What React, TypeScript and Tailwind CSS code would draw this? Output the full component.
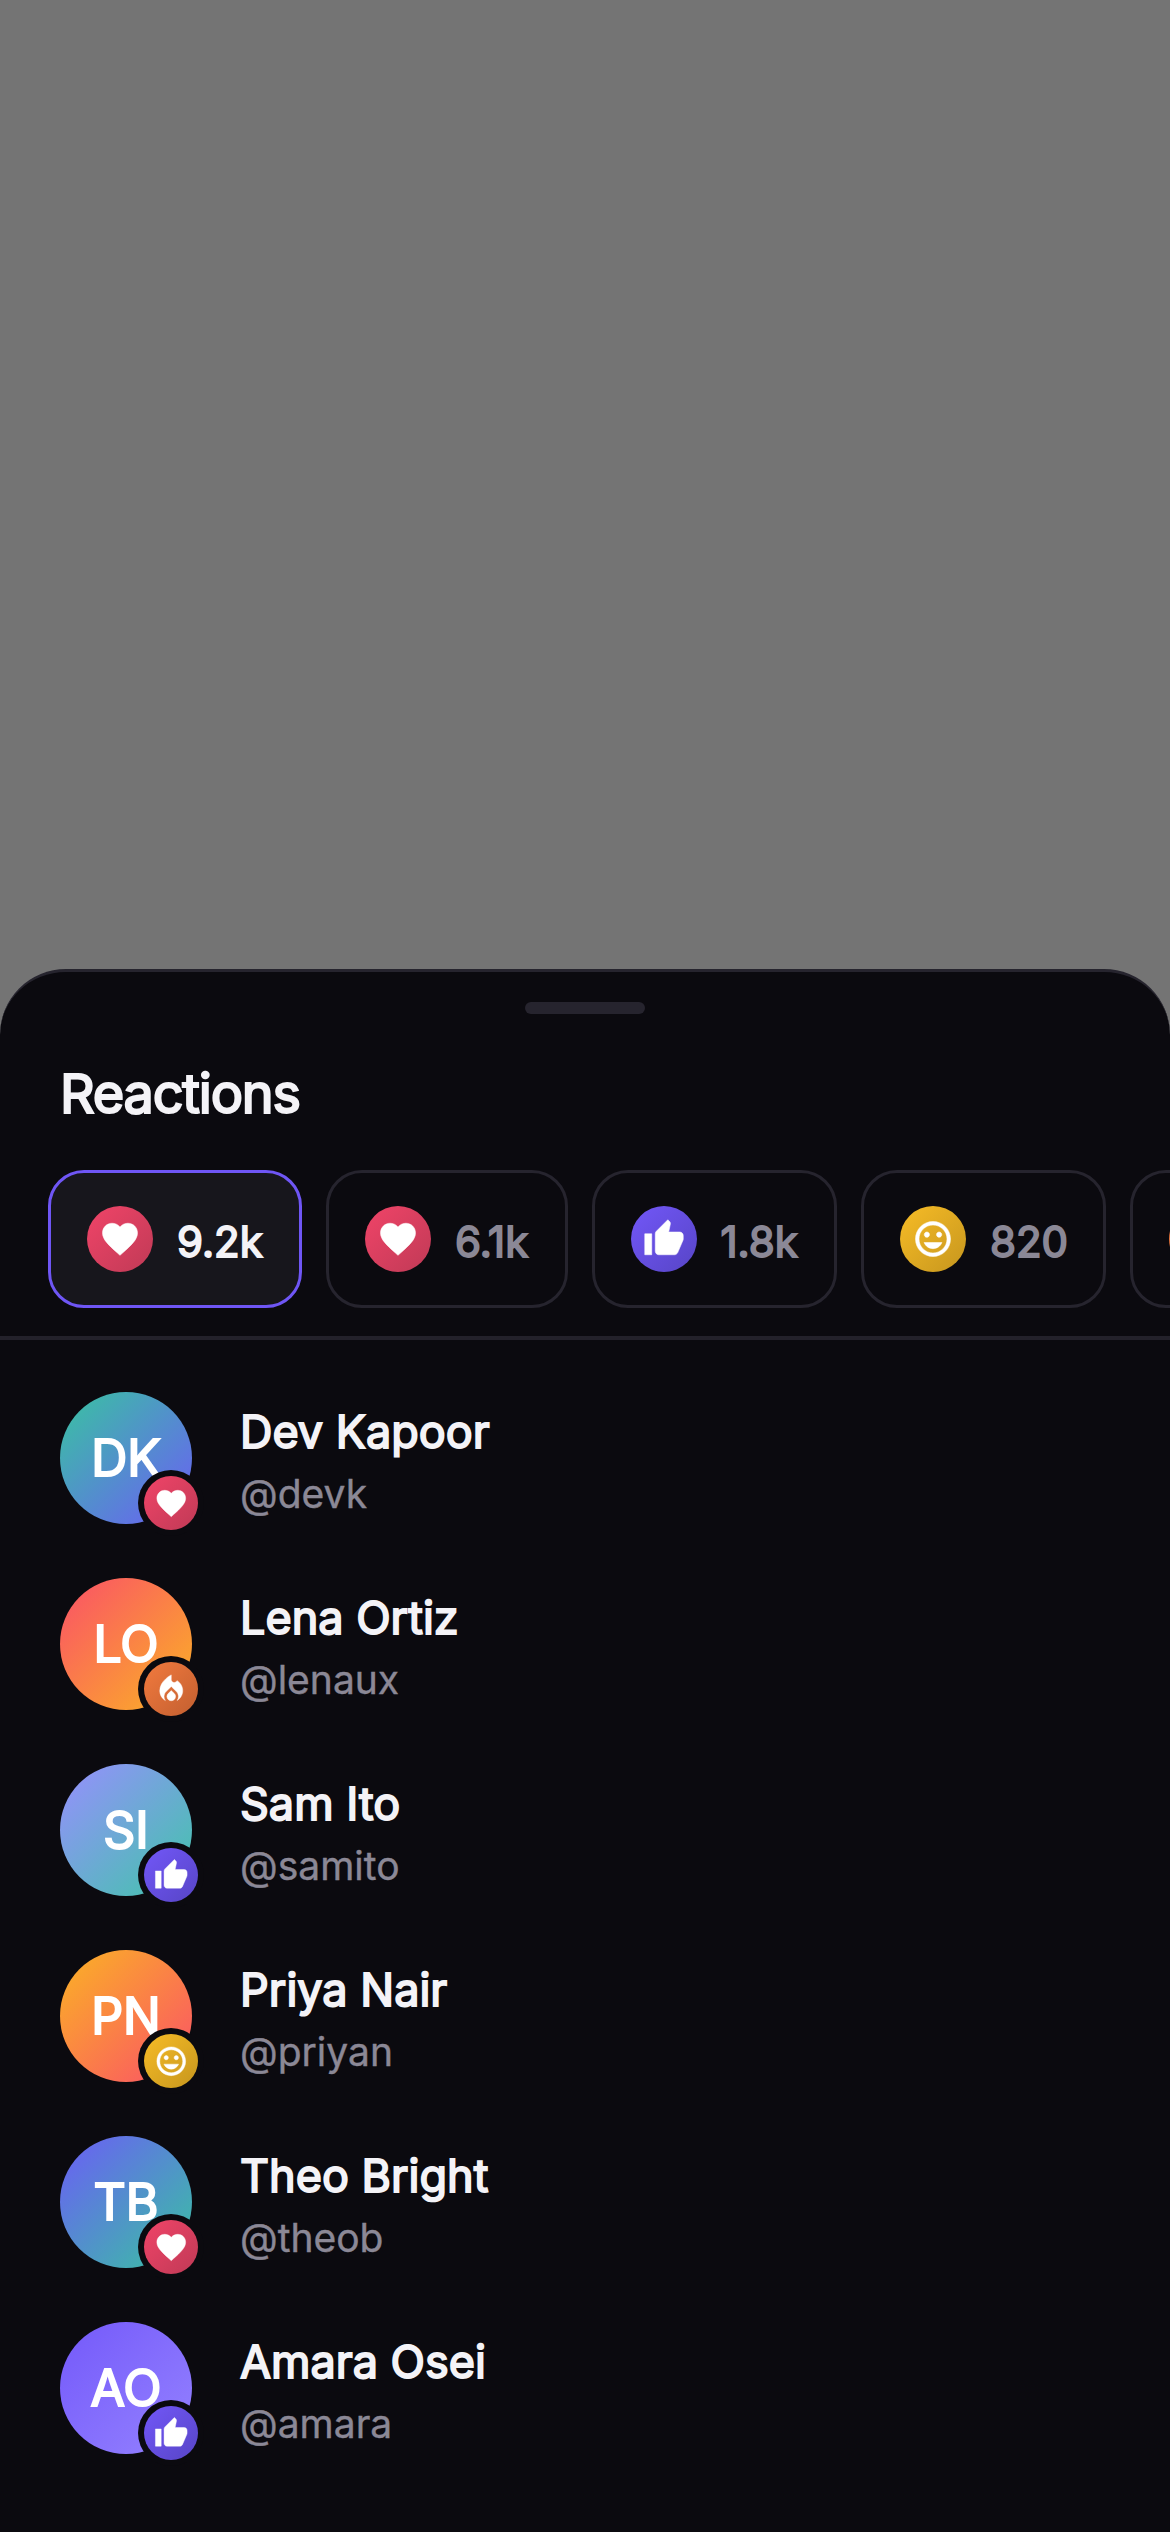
import type { IconType } from "react-icons";
import { MdFavorite, MdLocalFireDepartment, MdMood, MdThumbUp } from "react-icons/md";

type Kind = "love" | "like" | "laugh" | "fire";

const REACTIONS: Record<Kind, { Icon: IconType; bg: string }> = {
  love: { Icon: MdFavorite, bg: "bg-[linear-gradient(135deg,#f04468,#c03a56)]" },
  like: { Icon: MdThumbUp, bg: "bg-[linear-gradient(135deg,#7257f8,#5745c6)]" },
  laugh: { Icon: MdMood, bg: "bg-[linear-gradient(135deg,#f7bc26,#c6961e)]" },
  fire: { Icon: MdLocalFireDepartment, bg: "bg-[linear-gradient(135deg,#f27a3e,#c25f30)]" },
};

const TABS: { kind: Kind; count?: string; width: string }[] = [
  { kind: "love", count: "9.2k", width: "w-[254px]" },
  { kind: "love", count: "6.1k", width: "w-[241.5px]" },
  { kind: "like", count: "1.8k", width: "w-[245.5px]" },
  { kind: "laugh", count: "820", width: "w-[245px]" },
  { kind: "fire", width: "w-[246px]" }, // only its left edge fits on screen
];

const PEOPLE: { initials: string; name: string; handle: string; kind: Kind; bg: string }[] = [
  { initials: "DK", name: "Dev Kapoor", handle: "@devk", kind: "love", bg: "bg-[linear-gradient(135deg,#38c4a0,#6c5cf7)]" },
  { initials: "LO", name: "Lena Ortiz", handle: "@lenaux", kind: "fire", bg: "bg-[linear-gradient(135deg,#fa5068,#fbb324)]" },
  { initials: "SI", name: "Sam Ito", handle: "@samito", kind: "like", bg: "bg-[linear-gradient(135deg,#988eff,#3fc6a8)]" },
  { initials: "PN", name: "Priya Nair", handle: "@priyan", kind: "laugh", bg: "bg-[linear-gradient(135deg,#fbb324,#fa5068)]" },
  { initials: "TB", name: "Theo Bright", handle: "@theob", kind: "love", bg: "bg-[linear-gradient(135deg,#6c5cf7,#38c4a0)]" },
  { initials: "AO", name: "Amara Osei", handle: "@amara", kind: "like", bg: "bg-[linear-gradient(135deg,#7459fa,#9482ff)]" },
];

// The icons carry an invisible 24x24 box path, which must not pick up the stroke.
const ICON = "stroke-[0.3px] text-white [&>[fill=none]]:stroke-none";

function ReactionTab({ kind, count, width, active }: { kind: Kind; count?: string; width: string; active: boolean }) {
  const { Icon, bg } = REACTIONS[kind];
  return (
    <button
      className={`flex h-[138px] flex-none items-center gap-6 rounded-[36px] border-3 px-9 ${width} ${
        active ? "border-[#6f56f5] bg-[#17161c] text-[#f4f3f7]" : "border-[#26242e] text-[#8b8896]"
      }`}
    >
      <span className={`flex size-[66px] flex-none items-center justify-center rounded-full ${bg}`}>
        <Icon className={`size-[42px] ${ICON}`} />
      </span>
      {count && <span className="relative top-[2px] text-[42px] [-webkit-text-stroke:1.8px_currentColor]">{count}</span>}
    </button>
  );
}

function PersonRow({ initials, name, handle, kind, bg }: (typeof PEOPLE)[number]) {
  const { Icon, bg: badge } = REACTIONS[kind];
  return (
    <li className="flex h-[132px] items-center gap-12">
      <div className={`relative flex size-[132px] flex-none items-center justify-center rounded-full ${bg}`}>
        <span className="text-[50px] text-white [-webkit-text-stroke:2px_currentColor]">{initials}</span>
        <span className="absolute -right-3 -bottom-3 flex size-[66px] items-center justify-center rounded-full bg-[#0b0a0f]">
          <span className={`flex size-[54px] items-center justify-center rounded-full ${badge}`}>
            <Icon className={`size-[34.5px] ${ICON}`} />
          </span>
        </span>
      </div>
      <div className="pt-[7px]">
        <p className="text-[45px] leading-[54px] text-[#f4f3f7] [-webkit-text-stroke:1.8px_currentColor]">{name}</p>
        <p className="mt-[11px] text-[39px] leading-[48px] text-[#8b8896] [-webkit-text-stroke:0.4px_currentColor]">{handle}</p>
      </div>
    </li>
  );
}

export default function App() {
  return (
    <div className="flex h-[2532px] w-[1170px] flex-col justify-end overflow-hidden bg-[#747474] font-['Inter',sans-serif]">
      <section className="flex h-[1563px] flex-col rounded-t-[66px] border-t-3 border-[#26242e] bg-[#0b0a0f]">
        <div className="mx-auto mt-[30px] h-3 w-[120px] flex-none rounded-full bg-[#26242e]" />
        <h1 className="mt-[45px] ml-[60px] h-[70px] text-[54px] leading-[70px] tracking-[-1.2px] text-[#f4f3f7] [-webkit-text-stroke:2.1px_currentColor]">
          Reactions
        </h1>

        <div className="mt-[41px] flex gap-6 overflow-hidden pb-7 pl-12">
          {TABS.map((tab, i) => (
            <ReactionTab key={i} {...tab} active={i === 0} />
          ))}
        </div>
        <div className="h-1 flex-none bg-[#23212a]" />

        <ul className="mt-[52px] flex flex-col gap-[54px] pl-[60px]">
          {PEOPLE.map((person) => (
            <PersonRow key={person.handle} {...person} />
          ))}
        </ul>
      </section>
    </div>
  );
}
